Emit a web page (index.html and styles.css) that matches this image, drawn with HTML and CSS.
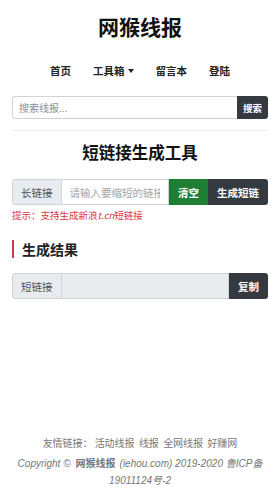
FILE: index.html
```html
<!DOCTYPE html>
<html lang="zh">
<head>
<meta charset="utf-8">
<link rel="stylesheet" href="styles.css">
</head>
<body>
<div class="page">
  <header class="header">
    <h1 class="logo">网猴线报</h1>
    <nav class="nav">
      <a class="nav-item">首页</a>
      <a class="nav-item">工具箱<span class="caret"></span></a>
      <a class="nav-item">留言本</a>
      <a class="nav-item">登陆</a>
    </nav>
  </header>
  <form class="search">
    <input class="search-input" placeholder="搜索线报...">
    <button class="btn btn-dark search-btn" type="button">搜索</button>
  </form>
  <hr class="divider">
  <h2 class="tool-title">短链接生成工具</h2>
  <div class="group">
    <span class="addon">长链接</span>
    <input class="field" placeholder="请输入要缩短的链接">
    <button class="btn btn-green" type="button">清空</button>
    <button class="btn btn-dark" type="button">生成短链</button>
  </div>
  <p class="tip">提示：支持生成新浪<i>t.cn</i>短链接</p>
  <h3 class="result-title">生成结果</h3>
  <div class="group">
    <span class="addon">短链接</span>
    <input class="field field-ro" readonly>
    <button class="btn btn-dark" type="button">复制</button>
  </div>
  <footer class="footer">
    <p class="links">友情链接：<a>活动线报</a> <a>线报</a> <a>全网线报</a> <a>好赚网</a></p>
    <p class="copy"><span class="nw">Copyright ©</span><b class="brand">网猴线报</b><span class="nw">(iehou.com) 2019-2020 鲁ICP备</span><br><span class="nw">19011124号-2</span></p>
  </footer>
</div>
</body>
</html>
```
FILE: styles.css
```css
* { box-sizing: border-box; }
body {
  margin: 0;
  font-family: "Noto Sans CJK SC", "Liberation Sans", sans-serif;
  color: #212529;
  background: #fff;
}
.page {
  padding: 0 12px;
  min-height: 497px;
  display: flex;
  flex-direction: column;
}
.header { text-align: center; }
.logo {
  margin: 11px 0 0;
  font-size: 21px;
  line-height: 30px;
  font-weight: 700;
  color: #111;
}
.nav {
  display: flex;
  justify-content: center;
  gap: 22px;
  margin-top: 22px;
  font-size: 10.5px;
  font-weight: 700;
  line-height: 16px;
}
.nav-item { color: #222; }
.caret {
  display: inline-block;
  margin-left: 3px;
  vertical-align: 2px;
  border-top: 4px solid #222;
  border-left: 3px solid transparent;
  border-right: 3px solid transparent;
}
.search {
  display: flex;
  margin-top: 17px;
  height: 23px;
}
.search-input {
  flex: 1;
  min-width: 0;
  border: 1px solid #ced4da;
  border-right: 0;
  border-radius: 3px 0 0 3px;
  padding: 0 6px;
  font: inherit;
  font-size: 10px;
  color: #495057;
}
.search-input::placeholder { color: #8a8f94; }
.btn {
  border: 0;
  font: inherit;
  font-size: 10.5px;
  font-weight: 700;
  color: #fff;
  padding: 0 9px;
  white-space: nowrap;
}
.btn-dark { background: #343a40; }
.btn-green { background: #1e7e34; }
.search-btn { border-radius: 0 3px 3px 0; padding: 0 6px; font-size: 9.5px; }
.divider {
  border: 0;
  border-top: 1px solid #eceeef;
  margin: 11px 0 0;
}
.tool-title {
  margin: 9px 0 0;
  text-align: center;
  font-size: 16.5px;
  line-height: 24px;
  font-weight: 700;
  color: #111;
}
.group {
  display: flex;
  height: 26px;
  margin-top: 15px;
}
.addon {
  display: flex;
  align-items: center;
  padding: 0 8px;
  background: #e9ecef;
  border: 1px solid #ced4da;
  border-radius: 3px 0 0 3px;
  font-size: 10.5px;
  color: #495057;
  white-space: nowrap;
}
.field {
  flex: 1;
  min-width: 0;
  border: 1px solid #ced4da;
  border-left: 0;
  padding: 0 8px;
  font: inherit;
  font-size: 10.5px;
  color: #495057;
}
.field::placeholder { color: #a0a5aa; }
.field-ro { background: #e9ecef; }
.group .btn:last-child { border-radius: 0 3px 3px 0; }
.tip {
  margin: 3px 0 0;
  font-size: 9.5px;
  line-height: 14px;
  color: #dc3545;
}
.result-title {
  margin: 18px 0 0;
  border-left: 2px solid #dc3545;
  padding-left: 8px;
  font-size: 14px;
  line-height: 18px;
  font-weight: 700;
  color: #222;
}
.result-title + .group { margin-top: 15px; }
.footer {
  margin-top: auto;
  padding-bottom: 8px;
  text-align: center;
  color: #777;
  font-size: 10px;
}
.footer p { margin: 0; }
.links { line-height: 18px; }
.links a { color: #777; margin-left: 2px; }
.copy {
  margin-top: 2px !important;
  font-family: "Liberation Sans", "Noto Sans CJK SC", sans-serif;
  font-style: italic;
  line-height: 17px;
  padding: 0 2px;
}
.nw { white-space: nowrap; }
.brand {
  font-style: normal;
  font-weight: 700;
  font-family: "Noto Sans CJK SC", sans-serif;
  margin: 0 4px 0 5px;
}
```
